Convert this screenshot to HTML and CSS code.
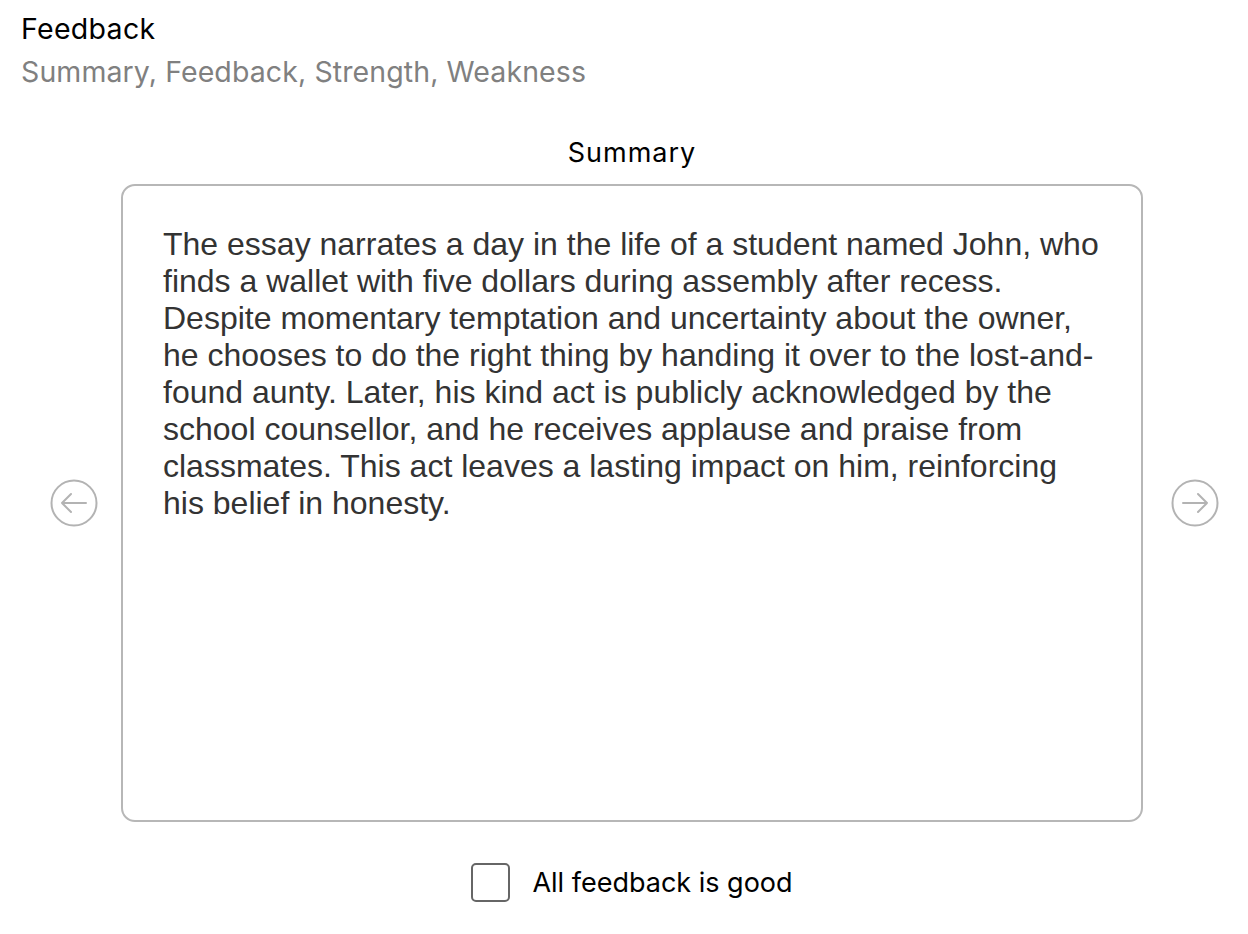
FILE: index.html
```html
<!DOCTYPE html>
<html lang="en">
<head>
<meta charset="utf-8">
<title>Feedback</title>
<link rel="stylesheet" href="styles.css">
</head>
<body>
<div class="page">
  <header class="header">
    <h1 class="title">Feedback</h1>
    <p class="subtitle">Summary, Feedback, Strength, Weakness</p>
  </header>
  <section class="panel">
    <h2 class="panel-title">Summary</h2>
    <div class="carousel">
      <button class="arrow" aria-label="Previous">
        <svg width="48" height="48" viewBox="0 0 48 48" fill="none" stroke="#b3b3b3" stroke-width="2" stroke-linecap="round" stroke-linejoin="round">
          <circle cx="24" cy="24" r="22.5"/>
          <path d="M36 24H12M21 15l-9 9 9 9"/>
        </svg>
      </button>
      <div class="card">
        <p class="card-text">The essay narrates a day in the life of a student named John, who finds a wallet with five dollars during assembly after recess. Despite momentary temptation and uncertainty about the owner, he chooses to do the right thing by handing it over to the lost-and-found aunty. Later, his kind act is publicly acknowledged by the school counsellor, and he receives applause and praise from classmates. This act leaves a lasting impact on him, reinforcing his belief in honesty.</p>
      </div>
      <button class="arrow" aria-label="Next">
        <svg width="48" height="48" viewBox="0 0 48 48" fill="none" stroke="#b3b3b3" stroke-width="2" stroke-linecap="round" stroke-linejoin="round">
          <circle cx="24" cy="24" r="22.5"/>
          <path d="M12 24h24M27 15l9 9-9 9"/>
        </svg>
      </button>
    </div>
    <label class="check">
      <span class="box"></span>
      <span class="check-label">All feedback is good</span>
    </label>
  </section>
</div>
</body>
</html>
```
FILE: styles.css
```css
* { box-sizing: border-box; }
html, body { margin: 0; padding: 0; background: #fff; }
body { font-family: "Inter", "Lato", sans-serif; color: #000; }
.page { width: 1248px; height: 934px; }
.header { padding: 11px 0 0 21px; }
.title { margin: 0; font-size: 28.5px; font-weight: 400; line-height: 36px; letter-spacing: 0.3px; }
.subtitle { margin: 7px 0 0; font-size: 28.5px; line-height: 36px; color: #808080; letter-spacing: 0.1px; }
.panel { display: flex; flex-direction: column; }
.panel-title { margin: 45px 0 0; font-size: 27px; font-weight: 400; line-height: 36px; text-align: center; padding-left: 16px; letter-spacing: 1px; }
.carousel { display: flex; align-items: center; padding-left: 50px; margin-top: 13px; }
.arrow { border: 0; background: none; padding: 0; width: 48px; height: 48px; display: flex; }
.card { margin: 0 28px 0 23px; width: 1022px; height: 638px; border: 2px solid #b7b7b7; border-radius: 14px; padding: 40px 40px 40px 40px; }
.card-text { margin: 0; font-family: "Liberation Sans", Arial, sans-serif; font-size: 32px; line-height: 37px; color: #333; }
.check { display: flex; align-items: center; justify-content: center; gap: 22px; margin-top: 41px; padding-left: 16px; }
.box { width: 39px; height: 39px; border: 2px solid #666; border-radius: 5px; }
.check-label { font-size: 27px; }
```
